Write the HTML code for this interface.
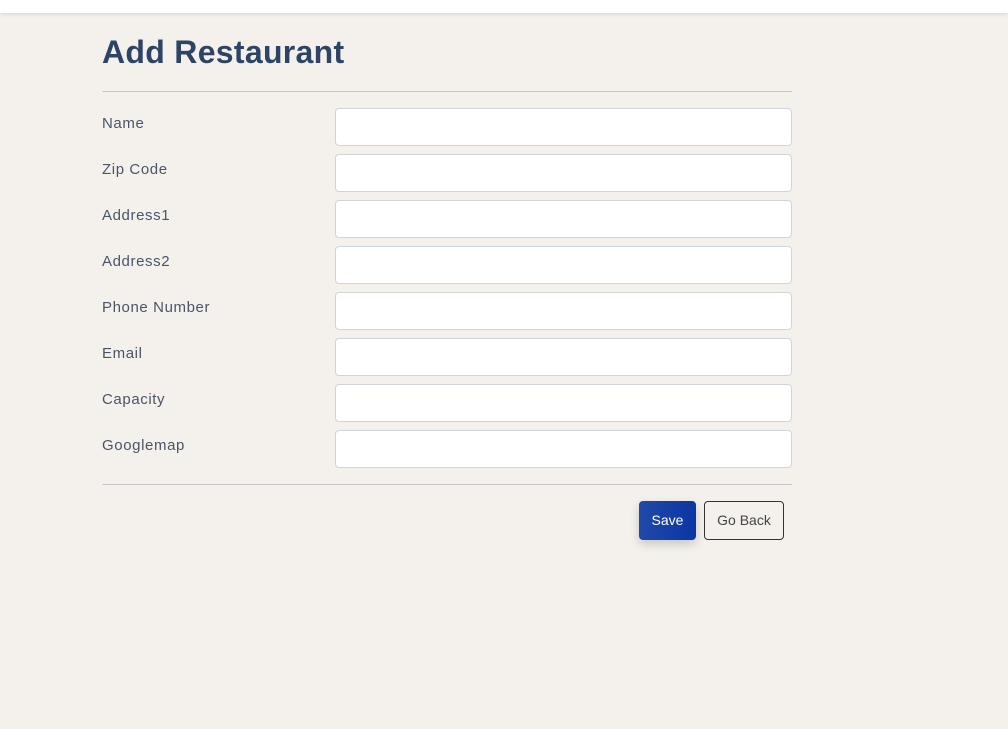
<!DOCTYPE html>
<html><head><style>
html,body{margin:0;padding:0;}
body{width:1008px;height:730px;background:#f4f1ec;font-family:"Liberation Sans",sans-serif;position:relative;overflow:hidden;}
.top{position:absolute;left:0;top:0;width:1008px;height:13px;background:#fff;box-shadow:0 1px 4px rgba(0,0,0,.12);}
h1{position:absolute;left:102px;top:34px;margin:0;font-size:32px;font-weight:bold;color:#2d4466;letter-spacing:0.3px;}
.hr{position:absolute;left:102px;width:690px;height:1px;background:#c8c8c8;}
.lbl{position:absolute;left:102px;font-size:15px;color:#4a5568;letter-spacing:0.6px;}
.in{position:absolute;left:335px;width:455px;height:36px;background:#fff;border:1px solid #ced4da;border-radius:4px;}
.save{position:absolute;left:639px;top:501px;width:57px;height:39px;background:linear-gradient(90deg,#2149a8,#0a36a4);border-radius:4px;color:#fff;font-size:14px;text-align:center;line-height:39px;box-shadow:0 4px 10px rgba(0,0,0,.18);}
.back{position:absolute;left:704px;top:501px;width:78px;height:37px;border:1px solid #333;border-radius:4px;color:#444;font-size:14px;text-align:center;line-height:37px;}
.bot{position:absolute;left:0;top:729px;width:1008px;height:1px;background:#fff;}
</style></head><body>
<div class="top"></div>
<h1>Add Restaurant</h1>
<div class="hr" style="top:91px"></div>
<div class="lbl" style="top:115px">Name</div><div class="in" style="top:108px"></div>
<div class="lbl" style="top:161px">Zip Code</div><div class="in" style="top:154px"></div>
<div class="lbl" style="top:207px">Address1</div><div class="in" style="top:200px"></div>
<div class="lbl" style="top:253px">Address2</div><div class="in" style="top:246px"></div>
<div class="lbl" style="top:299px">Phone Number</div><div class="in" style="top:292px"></div>
<div class="lbl" style="top:345px">Email</div><div class="in" style="top:338px"></div>
<div class="lbl" style="top:391px">Capacity</div><div class="in" style="top:384px"></div>
<div class="lbl" style="top:437px">Googlemap</div><div class="in" style="top:430px"></div>
<div class="hr" style="top:484px"></div>
<div class="save">Save</div>
<div class="back">Go Back</div>
<div class="bot"></div>
</body></html>
